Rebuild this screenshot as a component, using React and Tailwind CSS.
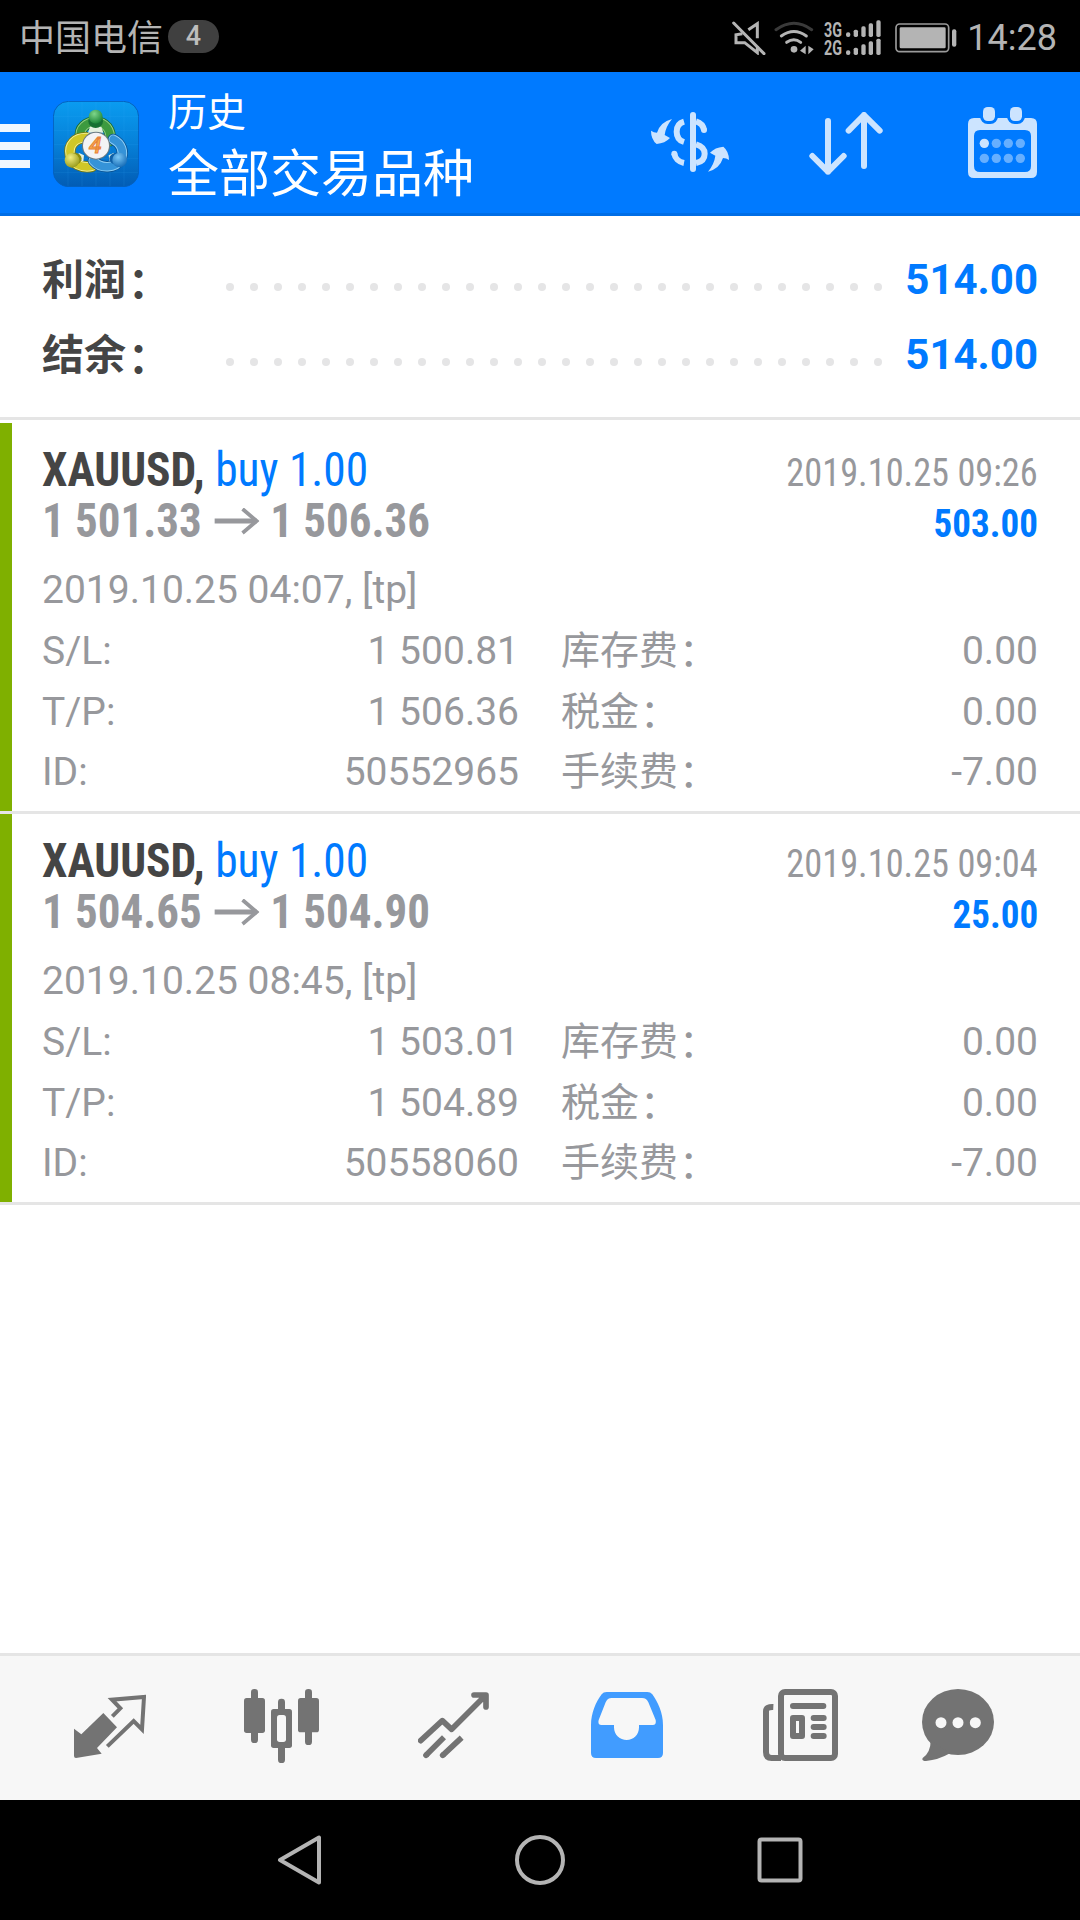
const summary = [
  { label: "利润", value: "514.00" },
  { label: "结余", value: "514.00" },
];

const deals = [
  {
    id: "50552965",
    symbol: "XAUUSD",
    side: "buy 1.00",
    open: "1 501.33",
    close: "1 506.36",
    closedAt: "2019.10.25 09:26",
    profit: "503.00",
    openedAt: "2019.10.25 04:07, [tp]",
    sl: "1 500.81",
    tp: "1 506.36",
    swap: "0.00",
    taxes: "0.00",
    commission: "-7.00",
  },
  {
    id: "50558060",
    symbol: "XAUUSD",
    side: "buy 1.00",
    open: "1 504.65",
    close: "1 504.90",
    closedAt: "2019.10.25 09:04",
    profit: "25.00",
    openedAt: "2019.10.25 08:45, [tp]",
    sl: "1 503.01",
    tp: "1 504.89",
    swap: "0.00",
    taxes: "0.00",
    commission: "-7.00",
  },
];

function StatusBar() {
  return (
    <div className="flex h-[72px] items-center bg-black pt-[3px] text-[36px] leading-[72px] text-[#b4b4b4]">
      <span className="ml-[19px] pt-[2px]">中国电信</span>
      <span className="ml-[5px] -mt-[2px] flex h-[33px] w-[51px] items-center justify-center rounded-full bg-[#404040] text-[27px] font-medium leading-[33px] text-[#bdbdbd]">
        4
      </span>
      <svg className="ml-auto h-[34px] w-[34px]" viewBox="96 58 102 102" fill="none" stroke="#b4b4b4" strokeWidth="9">
        <path d="M101 64 192 156" strokeLinecap="round" />
        <path d="M145 84 172 66V110M127 96 108 99V123H134L172 153V134" />
      </svg>
      <svg className="ml-[8px] h-[34px] w-[40px]" viewBox="220 58 120 102" fill="none" stroke="#b4b4b4" strokeWidth="9" strokeLinecap="round">
        <path d="M226 84Q280 46 333 84" stroke="#3a3a3a" />
        <path d="M242 103Q280 76 317 103M258 122Q280 107 300 122" />
        <circle cx="280" cy="143" r="10" fill="#b4b4b4" stroke="none" />
        <path d="M298 147 315 132V158ZM323 158V132L339 143Z" fill="#b4b4b4" stroke="none" />
      </svg>
      <svg className="ml-[10px] h-[36px] w-[57px] overflow-visible" viewBox="370 51 171 108" fill="#b4b4b4">
        <text x="370" y="101" fontSize="59" fontWeight="700" textLength="54" lengthAdjust="spacingAndGlyphs">3G</text>
        <text x="370" y="155" fontSize="59" fontWeight="700" textLength="54" lengthAdjust="spacingAndGlyphs">2G</text>
        <rect x="436" y="88" width="13" height="14" rx="6" />
        <rect x="459" y="80" width="13" height="22" rx="5" />
        <rect x="482" y="70" width="13" height="32" rx="5" />
        <rect x="504" y="61" width="13" height="41" rx="5" />
        <rect x="527" y="52" width="13" height="50" rx="5" />
        <rect x="436" y="142" width="13" height="14" rx="6" />
        <rect x="459" y="134" width="13" height="22" rx="5" />
        <rect x="482" y="124" width="13" height="32" rx="5" />
        <rect x="504" y="115" width="13" height="41" rx="5" />
        <rect x="527" y="107" width="13" height="49" rx="5" />
      </svg>
      <svg className="ml-[14px] h-[30px] w-[62px]" viewBox="586 62 186 90" fill="#b4b4b4">
        <rect x="589" y="65" width="158" height="83" rx="11" fill="none" stroke="#9a9a9a" strokeWidth="5" />
        <rect x="600" y="75" width="138" height="63" rx="4" />
        <rect x="757" y="81" width="13" height="52" rx="6" />
      </svg>
      <span className="ml-[10px] mr-[23px]">14:28</span>
    </div>
  );
}

function AppLogo() {
  return (
    <svg className="h-[86px] w-[86px]" viewBox="39 33 258 258">
      <defs>
        <linearGradient id="tile" x1="0" y1="0" x2="0" y2="1">
          <stop offset="0" stopColor="#0a9cf0" />
          <stop offset="0.5" stopColor="#0680d8" />
          <stop offset="1" stopColor="#025cb4" />
        </linearGradient>
        <radialGradient id="green" cx="0.4" cy="0.3" r="0.8">
          <stop offset="0" stopColor="#7fd68a" />
          <stop offset="1" stopColor="#0f7a2c" />
        </radialGradient>
        <radialGradient id="yellow" cx="0.4" cy="0.3" r="0.8">
          <stop offset="0" stopColor="#f2ee80" />
          <stop offset="1" stopColor="#8f9210" />
        </radialGradient>
        <radialGradient id="blue" cx="0.4" cy="0.3" r="0.8">
          <stop offset="0" stopColor="#7cc8f6" />
          <stop offset="1" stopColor="#0a62b0" />
        </radialGradient>
      </defs>
      <rect x="40" y="34" width="256" height="256" rx="46" fill="url(#tile)" stroke="#0560bd" strokeWidth="3" />
      <path d="M84 36V288M126 36V288M168 36V288M210 36V288M252 36V288M42 80H295M42 122H295M42 164H295M42 206H295M42 248H295" stroke="#3bb0ff" strokeOpacity="0.2" strokeWidth="2" />
      <g fill="none" strokeLinecap="round">
        <path d="M122 142C116 114 140 96 166 96C196 96 214 120 210 152" stroke="#1a6b2d" strokeWidth="34" />
        <path d="M122 142C116 114 140 96 166 96C196 96 214 120 210 152" stroke="#8fce84" strokeWidth="29" />
        <path d="M122 142C116 114 140 96 166 96C196 96 214 120 210 152" stroke="#3d9a3f" strokeWidth="23" />
        <path d="M140 143C106 142 84 164 91 196C96 220 122 235 156 229" stroke="#77780a" strokeWidth="34" />
        <path d="M140 143C106 142 84 164 91 196C96 220 122 235 156 229" stroke="#f0ef98" strokeWidth="29" />
        <path d="M140 143C106 142 84 164 91 196C96 220 122 235 156 229" stroke="#d0c728" strokeWidth="23" />
        <path d="M220 148C244 160 254 186 242 208C226 236 182 238 160 212" stroke="#0b5495" strokeWidth="34" />
        <path d="M220 148C244 160 254 186 242 208C226 236 182 238 160 212" stroke="#8bcdf5" strokeWidth="29" />
        <path d="M220 148C244 160 254 186 242 208C226 236 182 238 160 212" stroke="#3593d8" strokeWidth="23" />
      </g>
      <path d="M150 110H184L190 128H144ZM116 188 132 196 130 214 116 210ZM222 188 206 196 208 212 222 210Z" fill="#e4f0e0" />
      <ellipse cx="167" cy="94" rx="22" ry="20" fill="#177032" />
      <circle cx="167" cy="80" r="21" fill="url(#green)" />
      <ellipse cx="104" cy="206" rx="21" ry="18" fill="#8a8c10" />
      <circle cx="96" cy="211" r="22" fill="url(#yellow)" />
      <ellipse cx="230" cy="206" rx="22" ry="18" fill="#0f61a8" />
      <circle cx="239" cy="210" r="22" fill="url(#blue)" />
      <circle cx="168" cy="167" r="42" fill="#6b7a80" />
      <circle cx="168" cy="167" r="39" fill="#f3f3f5" />
      <text x="166" y="190" textAnchor="middle" fontSize="68" fontWeight="500" fontStyle="italic" fill="#f9b04c" stroke="#e8803a" strokeWidth="3">4</text>
    </svg>
  );
}

function Header() {
  return (
    <header className="flex h-[144px] border-b-[3px] border-[#006ee6] bg-[#007aff] text-white">
      <div className="mt-[52px] flex w-[30px] flex-col gap-[10px]">
        <div className="h-[8px] bg-[#f0f7ff]" />
        <div className="h-[8px] bg-[#f0f7ff]" />
        <div className="h-[8px] bg-[#f0f7ff]" />
      </div>
      <div className="ml-[23px] mt-[29px]">
        <AppLogo />
      </div>
      <div className="ml-[29px] mt-[11px]">
        <div className="text-[39px] leading-[60px]">历史</div>
        <div className="text-[51px] leading-[64px]">全部交易品种</div>
      </div>
      <svg className="ml-auto mt-[40px] h-[60px] w-[78px]" viewBox="93 96 234 180" fill="none" stroke="#cce4ff" strokeWidth="18">
        <path d="M219 105V267" strokeLinecap="round" />
        <path d="M192 125C178 129 170 140 170 155C170 171 179 182 192 186M228 193C245 198 254 209 254 221C254 237 244 246 228 249" />
        <path d="M252 150C250 138 241 128 228 124M163 221C165 235 176 246 192 249" />
        <circle cx="252" cy="150" r="9" fill="#cce4ff" stroke="none" />
        <circle cx="163" cy="221" r="9" fill="#cce4ff" stroke="none" />
        <path id="swap" d="M156 117Q121 126 111 158Q101 158 93 152Q93 178 110 192Q135 190 150 174L134 165Q137 140 156 117Z" fill="#cce4ff" stroke="none" />
        <use href="#swap" transform="rotate(180 210 196)" />
      </svg>
      <svg className="ml-[80px] mt-[40px] h-[63px] w-[74px]" viewBox="567 96 222 189" fill="none" stroke="#cce4ff" strokeWidth="18" strokeLinecap="round" strokeLinejoin="round">
        <path d="M624 123V275M577 228 624 275 671 228" />
        <path d="M732 258V105M686 152 732 105 779 152" />
      </svg>
      <svg className="ml-[85px] mr-[43px] mt-[34px] h-[72px] w-[69px]" viewBox="1044 78 207 216" fill="#cce4ff">
        <path fillRule="evenodd" d="M1062 114H1233Q1251 114 1251 132V276Q1251 294 1233 294H1062Q1044 294 1044 276V132Q1044 114 1062 114ZM1080 150Q1062 150 1062 168V258Q1062 276 1080 276H1215Q1233 276 1233 258V168Q1233 150 1215 150Z" />
        <g stroke="#007aff" strokeWidth="18" paintOrder="stroke">
          <rect x="1089" y="81" width="36" height="42" rx="14" />
          <rect x="1170" y="81" width="36" height="42" rx="14" />
        </g>
        <circle cx="1093" cy="190" r="14" />
        <g fill="#66afff">
          <circle cx="1129" cy="190" r="14" />
          <circle cx="1165" cy="190" r="14" />
          <circle cx="1201" cy="190" r="14" />
          <circle cx="1093" cy="235" r="14" />
          <circle cx="1129" cy="235" r="14" />
          <circle cx="1165" cy="235" r="14" />
          <circle cx="1201" cy="235" r="14" />
        </g>
      </svg>
    </header>
  );
}

function Summary() {
  return (
    <section className="h-[204px] border-b-[3px] border-[#e5e5e5] px-[42px] pt-[26px]">
      {summary.map((row) => (
        <div key={row.label} className="flex h-[75px] items-center text-[42px] font-bold leading-[75px]">
          <span className="w-[184px] pt-[2px] text-[#454545]">
            {row.label}
            <span className="relative left-[2px] top-[3px]">：</span>
          </span>
          <div className="mt-[15px] flex w-[656px] justify-between">
            {Array.from({ length: 28 }, (_, i) => (
              <span key={i} className="h-[8px] w-[8px] rounded-full bg-[#e5e5e6]" />
            ))}
          </div>
          <span className="ml-auto text-[#007aff]">{row.value}</span>
        </div>
      ))}
    </section>
  );
}

function Field({ label, value, cjk }) {
  return (
    <div className="flex justify-between">
      <span>
        {label}
        {cjk ? <span className="relative left-px top-[2px]">：</span> : ":"}
      </span>
      <span>{value}</span>
    </div>
  );
}

function Deal({ deal }) {
  return (
    <article className="h-[391px] border-b-[3px] border-[#e5e5e5]">
      <div className="h-[388px] border-l-[12px] border-[#7fb000] pl-[30px] pr-[42px] pt-[21px] text-[39px] text-[#97989c]">
        <div className="flex h-[51px] items-baseline justify-between leading-[51px] [font-stretch:75%]">
          <span className="origin-left scale-x-[0.947] text-[48px]">
            <b className="text-[#454545]">{deal.symbol},</b> <span className="text-[#007aff]">{deal.side}</span>
          </span>
          <span className="origin-right scale-x-[0.932]">{deal.closedAt}</span>
        </div>
        <div className="flex h-[51px] items-baseline justify-between font-bold leading-[51px] [font-stretch:75%]">
          <span className="flex origin-left scale-x-[0.937] items-baseline text-[48px]">
            {deal.open}
            <svg className="ml-[13px] mr-[12px] h-[29px] w-[48px]" viewBox="0 0 48 29" fill="none" stroke="#97989c">
              <path d="M0 13H45" strokeWidth="5" />
              <path d="M30 1 45 13 30 25" strokeWidth="4" />
            </svg>
            {deal.close}
          </span>
          <span className="origin-right scale-x-[0.95] text-[#007aff]">{deal.profit}</span>
        </div>
        <div className="mt-[14px] leading-[61px]">{deal.openedAt}</div>
        <div className="grid grid-cols-[477px_477px] grid-rows-[61px_60px_61px] gap-x-[42px] leading-[61px]">
          <Field label="S/L" value={deal.sl} />
          <Field label="库存费" value={deal.swap} cjk />
          <Field label="T/P" value={deal.tp} />
          <Field label="税金" value={deal.taxes} cjk />
          <Field label="ID" value={deal.id} />
          <Field label="手续费" value={deal.commission} cjk />
        </div>
      </div>
    </article>
  );
}

function TabBar() {
  return (
    <nav className="flex h-[147px] items-start border-t-[3px] border-[#e5e5e5] bg-[#f7f7f7] pl-[74px] pt-[33px]">
      <svg className="h-[75px] w-[72px]" viewBox="102 147 216 225" fill="none" stroke="#737373" strokeWidth="12">
        <path d="M190 219 231 262 171 324 185 341 108 354Q102 354 102 348V266L124 283Z" fill="#737373" stroke="none" />
        <path d="M217 229 241 205 216 179 312 171 306 268 281 243 202 319" />
      </svg>
      <svg className="ml-[98px] h-[75px] w-[75px]" viewBox="612 147 225 225" fill="#737373">
        <rect x="612" y="174" width="63" height="105" rx="8" />
        <rect x="633" y="147" width="21" height="162" rx="10" />
        <rect x="693" y="207" width="63" height="117" rx="8" />
        <rect x="714" y="176" width="21" height="193" rx="10" />
        <rect x="711" y="225" width="27" height="81" rx="8" fill="#f7f7f7" />
        <rect x="774" y="174" width="63" height="103" rx="8" />
        <rect x="795" y="147" width="21" height="168" rx="10" />
      </svg>
      <svg className="ml-[99px] h-[75px] w-[71px]" viewBox="1134 147 213 225" fill="none" stroke="#737373" strokeWidth="17">
        <path d="M1142 302 1207 242 1235 268 1337 166M1302 165H1338V201M1158 346 1159 345M1208 346 1209 345" strokeLinecap="round" strokeLinejoin="round" />
        <path d="M1158 346 1212 292M1208 346 1265 293" />
      </svg>
      <svg className="ml-[102px] h-[75px] w-[72px]" viewBox="153 147 216 225" fill="#419cff">
        <path
          fillRule="evenodd"
          d="M153 255C153 220 168 185 185 163Q190 156 200 156H322Q331 156 337 163C353 185 369 218 369 255V339Q369 354 354 354H168Q153 354 153 339ZM215 174Q202 174 197 187L176 240Q172 255 185 255H222V262C222 285 240 300 260 300C280 300 297 285 297 262V255H338Q350 255 347 240L325 187Q320 174 306 174Z"
        />
      </svg>
      <svg className="ml-[100px] h-[75px] w-[75px]" viewBox="669 147 225 225" fill="none" stroke="#737373" strokeWidth="18">
        <rect x="723" y="156" width="162" height="198" rx="12" />
        <path d="M700 201Q678 200 678 214V336Q678 354 695 354H723" />
        <path d="M759 198H850M821 234H851M821 261H851M821 288H851" strokeLinecap="round" />
        <rect x="759" y="234" width="27" height="54" strokeLinejoin="round" />
      </svg>
      <svg className="ml-[84px] h-[75px] w-[72px]" viewBox="1146 147 216 225" fill="#737373">
        <ellipse cx="1254" cy="246" rx="108" ry="99" />
        <path d="M1172 300Q1173 336 1148 354Q1144 363 1158 363Q1195 360 1230 340Z" />
        <g fill="#f7f7f7">
          <circle cx="1203" cy="248" r="16.5" />
          <circle cx="1254" cy="248" r="16.5" />
          <circle cx="1306" cy="248" r="16.5" />
        </g>
      </svg>
    </nav>
  );
}

function SystemNav() {
  return (
    <div className="flex h-[120px] items-center bg-black pl-[277px]">
      <svg className="h-[50px] w-[45px]" viewBox="0 0 45 50" fill="none" stroke="#b4b4b4" strokeWidth="4" strokeLinejoin="round">
        <path d="M3 25 42 2.5V47.5Z" />
      </svg>
      <svg className="ml-[193px] h-[50px] w-[50px]" viewBox="0 0 50 50" fill="none" stroke="#b4b4b4" strokeWidth="4">
        <circle cx="25" cy="25" r="23" />
      </svg>
      <svg className="ml-[192px] h-[46px] w-[46px]" viewBox="0 0 46 46" fill="none" stroke="#b4b4b4" strokeWidth="4">
        <rect x="2.5" y="2.5" width="41" height="41" rx="2" />
      </svg>
    </div>
  );
}

function App() {
  return (
    <div className="flex h-[1920px] w-[1080px] flex-col overflow-hidden bg-white font-['Roboto','Noto_Sans_CJK_SC',sans-serif]">
      <StatusBar />
      <Header />
      <Summary />
      <main className="flex-1 pt-[3px]">
        {deals.map((deal) => (
          <Deal key={deal.id} deal={deal} />
        ))}
      </main>
      <TabBar />
      <SystemNav />
    </div>
  );
}

export default App;
